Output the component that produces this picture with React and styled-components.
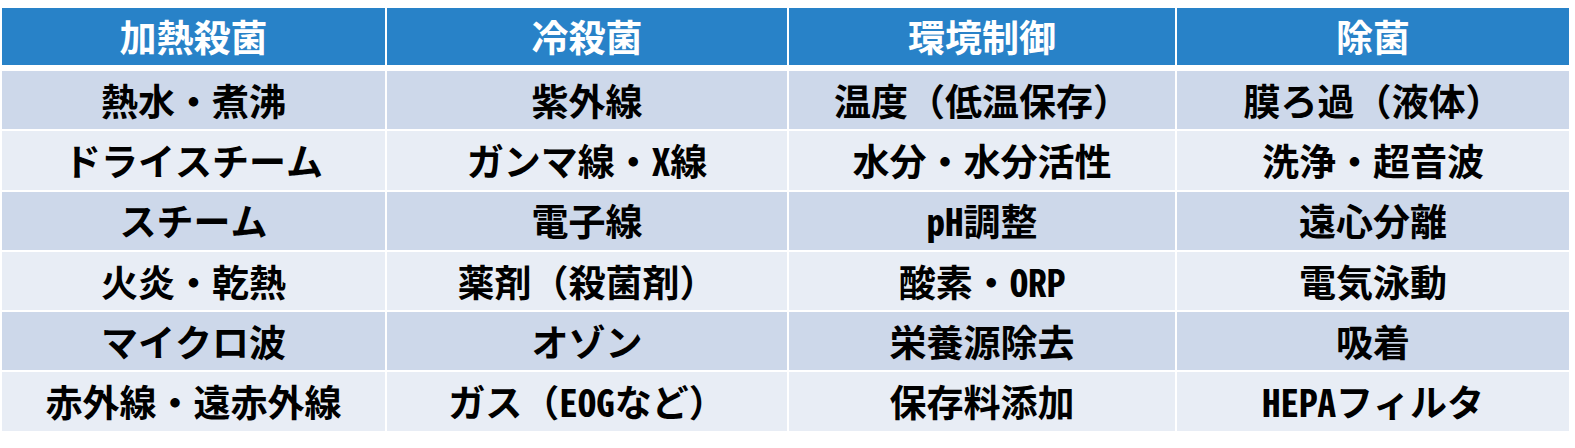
import React from 'react';
import styled, { createGlobalStyle } from 'styled-components';

const GlobalStyle = createGlobalStyle`
  html, body {
    margin: 0;
    padding: 0;
    background: #ffffff;
  }
  body {
    font-family: "Noto Sans Mono CJK JP", "Noto Sans CJK JP", "Noto Sans", sans-serif;
  }
`;

const headers = ['加熱殺菌', '冷殺菌', '環境制御', '除菌'];

const rows = [
  ['熱水・煮沸', '紫外線', '温度（低温保存）', '膜ろ過（液体）'],
  ['ドライスチーム', 'ガンマ線・X線', '水分・水分活性', '洗浄・超音波'],
  ['スチーム', '電子線', 'pH調整', '遠心分離'],
  ['火炎・乾熱', '薬剤（殺菌剤）', '酸素・ORP', '電気泳動'],
  ['マイクロ波', 'オゾン', '栄養源除去', '吸着'],
  ['赤外線・遠赤外線', 'ガス（EOGなど）', '保存料添加', 'HEPAフィルタ'],
];

const Page = styled.div`
  padding: 8px 0 0 2px;
  width: 1575px;
  height: 448px;
  box-sizing: border-box;
`;

const Grid = styled.div`
  display: grid;
  grid-template-columns: 383px 400px 386px 392px;
  grid-auto-rows: ${p => p.$rowHeight};
  column-gap: 2px;
  row-gap: 2px;
  width: 1567px;
  margin-top: ${p => p.$offset || '0'};
`;

const HeadCell = styled.div`
  display: flex;
  align-items: center;
  justify-content: center;
  background: #2882c8;
  color: #ffffff;
  font-size: 37px;
  font-weight: 700;
  line-height: 1;
`;

const Cell = styled.div`
  display: flex;
  align-items: center;
  justify-content: center;
  background: ${p => (p.$odd ? '#cdd8ea' : '#e8edf5')};
  color: #000000;
  font-size: 37px;
  font-weight: 700;
  line-height: 1;
  white-space: nowrap;
`;

const App = () => {
  return (
    <Page>
      <GlobalStyle />
      <Grid $rowHeight="57px">
        {headers.map(h => (
          <HeadCell key={h}>{h}</HeadCell>
        ))}
      </Grid>
      <Grid $rowHeight="58.3px" $offset="6px">
        {rows.map((row, i) =>
          row.map((text, j) => (
            <Cell key={i + '-' + j} $odd={i % 2 === 0}>
              {text}
            </Cell>
          ))
        )}
      </Grid>
    </Page>
  );
};

export default App;
